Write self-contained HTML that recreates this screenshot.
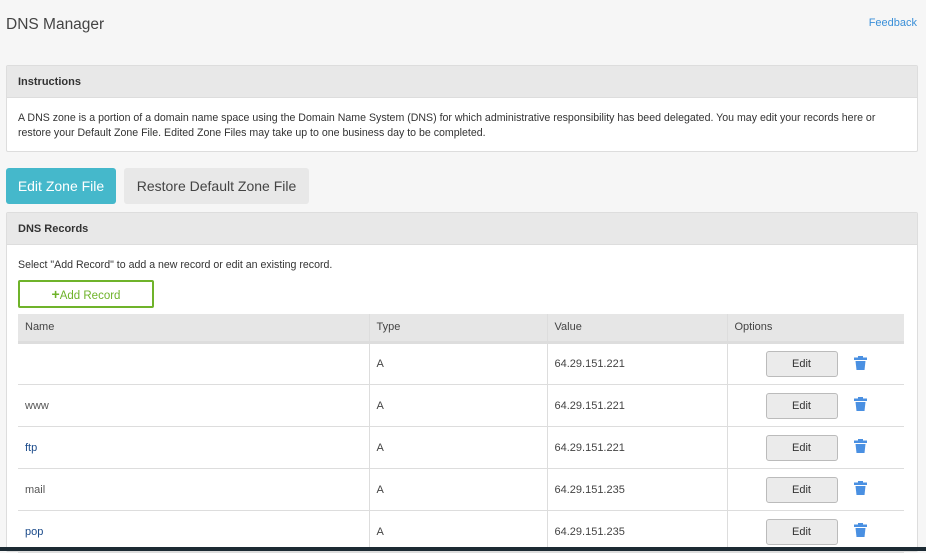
<!DOCTYPE html>
<html><head><style>
*{box-sizing:border-box;margin:0;padding:0}
body{width:926px;height:551px;overflow:hidden;background:#f6f6f6;font-family:"Liberation Sans",sans-serif;color:#333;position:relative}
.title{position:absolute;left:6px;top:16px;font-size:15.5px;color:#444}
.fb{position:absolute;right:9px;top:17px;font-size:11px;color:#3a8fd8}
.panel{position:absolute;left:6px;width:912px;border:1px solid #ddd;background:#fff;border-radius:2px}
.ph{background:#e8e8e8;border-bottom:1px solid #ddd;font-size:11px;font-weight:bold;padding:0 11px;color:#333}
.btn1{position:absolute;left:6px;top:168px;width:110px;height:36px;background:#45b8cb;color:#fff;font-size:14px;line-height:36px;text-align:center;border-radius:3px}
.btn2{position:absolute;left:124px;top:168px;width:185px;height:36px;background:#e8e8e8;color:#444;font-size:14px;line-height:36px;text-align:center;border-radius:3px}
table{position:absolute;left:18px;top:314px;width:886px;border-collapse:collapse;font-size:11px}
th{background:#e6e6e6;text-align:left;font-weight:normal;color:#444;height:28px;padding-left:7px;border-bottom:3px solid #ddd;border-left:1px solid #ddd}
td{height:42px;padding-left:7px;padding-top:1px;border-bottom:1px solid #ddd;border-left:1px solid #ddd;color:#444}
th:first-child,td:first-child{border-left:none}
td.n{color:#1a4a8a}
.e{display:inline-block;width:72px;height:26px;border:1px solid #bbb;border-radius:3px;background:#ebebeb;text-align:center;line-height:24px;font-size:11px;margin-left:31px;vertical-align:middle;color:#333}
.t{display:inline-block;margin-left:16px;vertical-align:middle}
</style></head><body>
<div class="title">DNS Manager</div>
<div class="fb">Feedback</div>
<div class="panel" style="top:65px;height:87px">
<div class="ph" style="height:32px;line-height:32px">Instructions</div>
<div style="font-size:10.6px;padding:13px 11px;line-height:15px;color:#333">A DNS zone is a portion of a domain name space using the Domain Name System (DNS) for which administrative responsibility has beed delegated. You may edit your records here or restore your Default Zone File. Edited Zone Files may take up to one business day to be completed.</div>
</div>
<div class="btn1">Edit Zone File</div>
<div class="btn2">Restore Default Zone File</div>
<div class="panel" style="top:212px;height:340px">
<div class="ph" style="height:32px;line-height:32px">DNS Records</div>
<div style="font-size:10.6px;position:absolute;left:11px;top:46px">Select "Add Record" to add a new record or edit an existing record.</div>
<div style="position:absolute;left:11px;top:67px;width:136px;height:28px;border:2px solid #6fb32a;border-radius:2px;color:#6fb32a;font-size:11.5px;text-align:center;line-height:24px"><b style="font-size:14px">+</b>Add Record</div>
</div>
<table>
<tr><th style="width:351px">Name</th><th style="width:178px">Type</th><th style="width:180px">Value</th><th>Options</th></tr>
<tr><td class="n"></td><td>A</td><td>64.29.151.221</td><td><span class="e">Edit</span><span class="t"><svg width="13" height="14" viewBox="0 0 13 14"><rect x="0" y="1.5" width="13" height="2.5" fill="#4a90e2"/><rect x="4" y="0" width="5" height="2" fill="#4a90e2"/><path d="M1.5 5H11.5L10.5 14H2.5Z" fill="#4a90e2"/></svg></span></td></tr>
<tr><td style="color:#555">www</td><td>A</td><td>64.29.151.221</td><td><span class="e">Edit</span><span class="t"><svg width="13" height="14" viewBox="0 0 13 14"><rect x="0" y="1.5" width="13" height="2.5" fill="#4a90e2"/><rect x="4" y="0" width="5" height="2" fill="#4a90e2"/><path d="M1.5 5H11.5L10.5 14H2.5Z" fill="#4a90e2"/></svg></span></td></tr>
<tr><td class="n">ftp</td><td>A</td><td>64.29.151.221</td><td><span class="e">Edit</span><span class="t"><svg width="13" height="14" viewBox="0 0 13 14"><rect x="0" y="1.5" width="13" height="2.5" fill="#4a90e2"/><rect x="4" y="0" width="5" height="2" fill="#4a90e2"/><path d="M1.5 5H11.5L10.5 14H2.5Z" fill="#4a90e2"/></svg></span></td></tr>
<tr><td style="color:#555">mail</td><td>A</td><td>64.29.151.235</td><td><span class="e">Edit</span><span class="t"><svg width="13" height="14" viewBox="0 0 13 14"><rect x="0" y="1.5" width="13" height="2.5" fill="#4a90e2"/><rect x="4" y="0" width="5" height="2" fill="#4a90e2"/><path d="M1.5 5H11.5L10.5 14H2.5Z" fill="#4a90e2"/></svg></span></td></tr>
<tr><td class="n">pop</td><td>A</td><td>64.29.151.235</td><td><span class="e">Edit</span><span class="t"><svg width="13" height="14" viewBox="0 0 13 14"><rect x="0" y="1.5" width="13" height="2.5" fill="#4a90e2"/><rect x="4" y="0" width="5" height="2" fill="#4a90e2"/><path d="M1.5 5H11.5L10.5 14H2.5Z" fill="#4a90e2"/></svg></span></td></tr>
</table>
<div style="position:absolute;left:0;top:547px;width:926px;height:4px;background:#1c2a33"></div>
</body></html>
